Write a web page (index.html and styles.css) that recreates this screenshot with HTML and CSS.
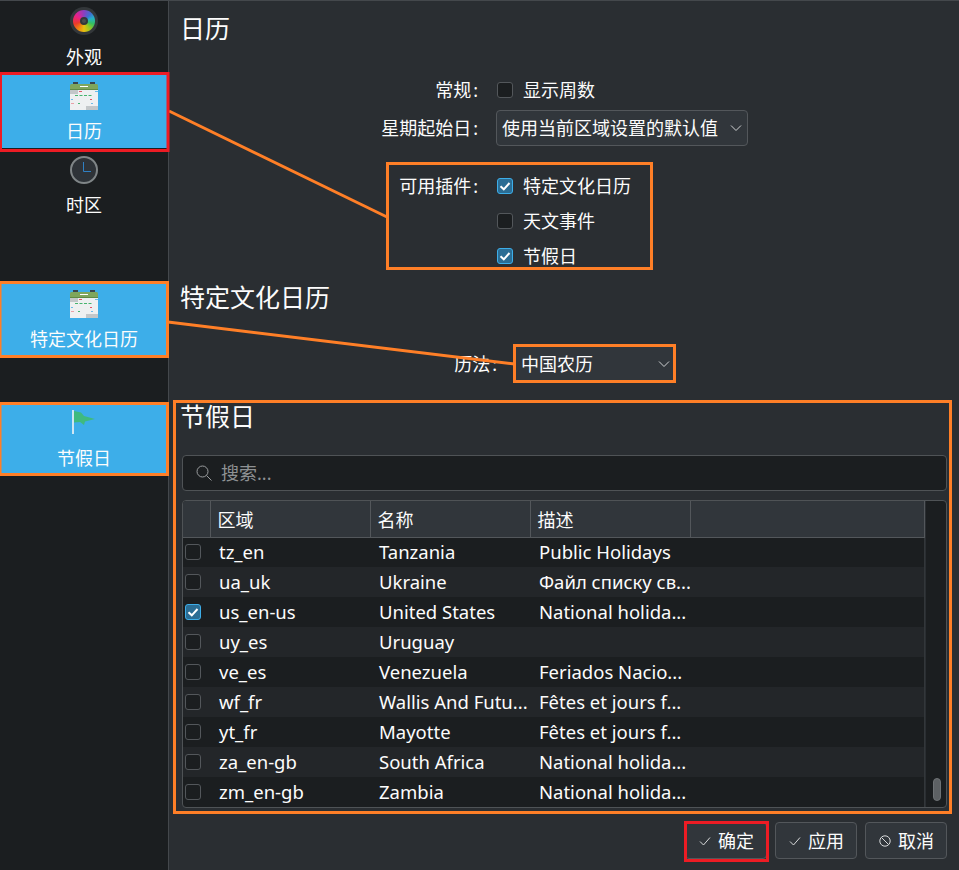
FILE: index.html
```html
<!DOCTYPE html>
<html lang="zh">
<head>
<meta charset="utf-8">
<title>日历</title>
<link rel="stylesheet" href="styles.css">
</head>
<body>
<svg class="defs" width="0" height="0" aria-hidden="true">
  <symbol id="cal" viewBox="0 0 28 28">
    <rect x="3" y="0" width="5" height="4" fill="#3a4650"/>
    <rect x="20" y="0" width="5" height="4" fill="#3a4650"/>
    <path d="M0 8V3.500Q0 2 1.500 2H26.500Q28 2 28 3.500V8Z" fill="#7fa65c"/>
    <rect x="0" y="7" width="28" height="1" fill="#5f8a45"/>
    <rect x="0" y="8" width="28" height="20" fill="#eef0f1"/>
    <rect x="0" y="8" width="8" height="4" fill="#c3c7c9"/>
    <rect x="16" y="24" width="12" height="4" fill="#c3c7c9"/>
    <rect x="10" y="4" width="8" height="1" fill="#fff"/>
    <rect x="9" y="9" width="3" height="1" fill="#e0566a"/>
    <rect x="25" y="9" width="3" height="1" fill="#6cbbe8"/>
    <path d="M5 13.500H22" stroke="#46b46e" stroke-width="1" stroke-dasharray="3 1.500"/>
    <rect x="1" y="17" width="2" height="1" fill="#6cbbe8"/>
    <rect x="20" y="17" width="2" height="1" fill="#e0566a"/>
    <rect x="1" y="21" width="3" height="1" fill="#e8a0a8"/>
    <rect x="8" y="21" width="2" height="1" fill="#46b46e"/>
    <rect x="21" y="21" width="2" height="1" fill="#6cbbe8"/>
  </symbol>
  <symbol id="chk" viewBox="0 0 16 16">
    <path d="M3.500 8.200 6.800 11.300 12.500 5" fill="none" stroke="#fff" stroke-width="2"/>
  </symbol>
  <symbol id="chev" viewBox="0 0 12 8">
    <path d="M1 1.500 6 6.500 11 1.500" fill="none" stroke="#d0d2d3" stroke-width="1"/>
  </symbol>
  <symbol id="tick" viewBox="0 0 12 12">
    <path d="M1 6.500 4.500 10 11 2.500" fill="none" stroke="#d8dadb" stroke-width="1"/>
  </symbol>
</svg>

<div class="app">
  <nav class="sidebar">
    <div class="nav-item first">
      <span class="wheel"><span class="wheel-hole"></span></span>
      <span class="nav-label">外观</span>
    </div>
    <div class="nav-item active main-active">
      <svg class="nav-icon"><use href="#cal"/></svg>
      <span class="nav-label">日历</span>
    </div>
    <div class="nav-item clock-item">
      <svg class="nav-icon" viewBox="0 0 28 28">
        <circle cx="14" cy="14" r="13" fill="#2e3338" stroke="#7f8587" stroke-width="2"/>
        <path d="M13.500 6V15.500H21" fill="none" stroke="#2f80c4" stroke-width="1"/>
      </svg>
      <span class="nav-label">时区</span>
    </div>
    <div class="nav-item active culture">
      <svg class="nav-icon"><use href="#cal"/></svg>
      <span class="nav-label">特定文化日历</span>
    </div>
    <div class="nav-item active holiday">
      <svg class="nav-icon" viewBox="0 0 28 28">
        <rect x="2" y="0" width="2" height="24" fill="#cfe6f4"/>
        <path d="M4 1 11 2.500 14 6 25 9 15 11.500 14 15 10 12 4 12.500Z" fill="#3fba7f"/>
      </svg>
      <span class="nav-label">节假日</span>
    </div>
  </nav>

  <main class="content">
    <h2 class="title title-top">日历</h2>

    <div class="form form-general">
      <div class="row">
        <span class="label">常规<span class="colon">:</span></span>
        <span class="check"><span class="box"></span>显示周数</span>
      </div>
      <div class="row row-combo">
        <span class="label">星期起始日<span class="colon">:</span></span>
        <span class="combo combo-wide">使用当前区域设置的默认值<svg class="chev"><use href="#chev"/></svg></span>
      </div>
      <div class="row row-plugin">
        <span class="label">可用插件<span class="colon">:</span></span>
        <span class="check"><span class="box on"><svg class="box-tick"><use href="#chk"/></svg></span>特定文化日历</span>
      </div>
      <div class="row row-tight">
        <span class="label"></span>
        <span class="check"><span class="box"></span>天文事件</span>
      </div>
      <div class="row row-tight">
        <span class="label"></span>
        <span class="check"><span class="box on"><svg class="box-tick"><use href="#chk"/></svg></span>节假日</span>
      </div>
    </div>

    <h2 class="title title-culture">特定文化日历</h2>
    <div class="form form-culture">
      <div class="row">
        <span class="label label-culture">历法<span class="colon">:</span></span>
        <span class="combo combo-cal">中国农历<svg class="chev"><use href="#chev"/></svg></span>
      </div>
    </div>

    <h2 class="title title-holiday">节假日</h2>
    <div class="search">
      <svg class="search-icon" viewBox="0 0 16 16"><circle cx="6.500" cy="6.500" r="5.500" fill="none" stroke="#9a9d9f" stroke-width="1"/><path d="M10.500 10.500 15.500 15.500" stroke="#9a9d9f" stroke-width="1"/></svg>
      <span>搜索...</span>
    </div>

    <div class="list">
      <table class="grid">
        <colgroup><col class="c0"><col class="c1"><col class="c1"><col class="c1"><col></colgroup>
        <thead><tr><th></th><th>区域</th><th>名称</th><th>描述</th><th></th></tr></thead>
        <tbody>
          <tr><td><span class="box"></span></td><td>tz_en</td><td>Tanzania</td><td>Public Holidays</td><td></td></tr>
          <tr><td><span class="box"></span></td><td>ua_uk</td><td>Ukraine</td><td>Файл списку св...</td><td></td></tr>
          <tr><td><span class="box on"><svg class="box-tick"><use href="#chk"/></svg></span></td><td>us_en-us</td><td>United States</td><td>National holida...</td><td></td></tr>
          <tr><td><span class="box"></span></td><td>uy_es</td><td>Uruguay</td><td></td><td></td></tr>
          <tr><td><span class="box"></span></td><td>ve_es</td><td>Venezuela</td><td>Feriados Nacio...</td><td></td></tr>
          <tr><td><span class="box"></span></td><td>wf_fr</td><td>Wallis And Futu...</td><td>Fêtes et jours f...</td><td></td></tr>
          <tr><td><span class="box"></span></td><td>yt_fr</td><td>Mayotte</td><td>Fêtes et jours f...</td><td></td></tr>
          <tr><td><span class="box"></span></td><td>za_en-gb</td><td>South Africa</td><td>National holida...</td><td></td></tr>
          <tr><td><span class="box"></span></td><td>zm_en-gb</td><td>Zambia</td><td>National holida...</td><td></td></tr>
        </tbody>
      </table>
      <div class="scrollbar"><span class="thumb"></span></div>
    </div>

    <div class="buttons">
      <button class="btn"><svg class="btn-icon"><use href="#tick"/></svg>确定</button>
      <button class="btn"><svg class="btn-icon"><use href="#tick"/></svg>应用</button>
      <button class="btn"><svg class="btn-icon" viewBox="0 0 12 12"><circle cx="6" cy="6" r="5.200" fill="none" stroke="#d8dadb" stroke-width="1"/><path d="M2.500 2.500 9.500 9.500" stroke="#d8dadb" stroke-width="1"/></svg>取消</button>
    </div>
  </main>
</div>

<svg class="marks" width="959" height="870" viewBox="0 0 959 870" aria-hidden="true">
  <g fill="none" stroke="#ff7f27" stroke-width="3">
    <path d="M169 111 387 217"/>
    <path d="M168 322 515 364"/>
    <rect x="387.500" y="163.500" width="264" height="105"/>
    <rect x="514.500" y="345.500" width="160" height="36"/>
    <rect x="174.500" y="401.500" width="776" height="411"/>
    <rect x="0" y="282.500" width="167.500" height="74"/>
    <rect x="0" y="403.500" width="167.500" height="71"/>
  </g>
  <g fill="none" stroke="#ed1c24" stroke-width="3">
    <rect x="0.500" y="73.500" width="167.500" height="77"/>
    <rect x="685.500" y="822.500" width="82" height="38"/>
  </g>
</svg>
</body>
</html>
```
FILE: styles.css
```css
* { box-sizing: border-box; }
html, body { margin: 0; height: 870px; overflow: hidden; }
body {
  background: #2a2e32;
  color: #fcfcfc;
  font: 18px/24px "Noto Sans", "Noto Sans CJK SC", sans-serif;
  position: relative;
}
.defs { position: absolute; }

.app { display: flex; height: 870px; border-top: 1px solid #44484c; }

.sidebar {
  width: 169px;
  flex: none;
  background: #1b1e20;
  border-right: 1px solid #44484c;
  display: flex;
  flex-direction: column;
}
.nav-item {
  display: flex;
  flex-direction: column;
  align-items: center;
}
.nav-label { line-height: 24px; }
.nav-icon { width: 28px; height: 28px; display: block; }
.active { background: #3daee9; }
.first { height: 73px; padding-top: 6px; }
.wheel {
  width: 28px; height: 28px; border-radius: 50%;
  background: #33373a;
  display: flex; align-items: center; justify-content: center;
  position: relative;
}
.wheel::before {
  content: "";
  width: 22px; height: 22px; border-radius: 50%;
  background: conic-gradient(#8a3fc0, #3d6fd0 12%, #25b0c8 20%, #35c060 30%, #9cc820 40%, #e8c010 50%, #f09010 58%, #ec3a2a 70%, #e8208c 85%, #8a3fc0);
}
.wheel-hole {
  position: absolute; left: 10px; top: 10px;
  width: 8px; height: 8px; border-radius: 50%;
  background: #4a4e50;
  border: 2px solid #33373a;
}
.first .nav-label { margin-top: 10px; }
.main-active { height: 76px; padding-top: 8px; border-bottom: 2px solid #1b1e20; }
.main-active .nav-label { margin-top: 9px; }
.clock-item { height: 76px; padding-top: 6px; }
.clock-item .nav-label { margin-top: 9px; }
.culture { margin-top: 55px; height: 76px; padding-top: 9px; }
.culture .nav-label { margin-top: 9px; }
.holiday { margin-top: 45px; height: 73px; padding-top: 8px; }
.holiday .nav-label { margin-top: 8px; }

.content {
  flex: 1;
  min-width: 0;
  padding: 0 12px 0 13px;
  display: flex;
  flex-direction: column;
}
.title { margin: 0 0 0 -2px; font-size: 25px; line-height: 36px; font-weight: 400; }
.title-top { margin-top: 9px; }
.title-culture { margin-top: 11px; }
.title-holiday { margin-top: 16px; }

.form-general { margin-top: 32px; }
.form-culture { margin-top: 31px; }
.row { display: flex; align-items: center; min-height: 24px; }
.row-combo { margin-top: 8px; }
.row-plugin { margin-top: 28px; }
.row-tight { margin-top: 11px; }
.label { width: 296px; flex: none; text-align: right; margin-right: 18px; white-space: nowrap; }
.label-culture { width: 315px; margin-right: 18px; }
.colon { margin-left: 2px; }

.check { display: inline-flex; align-items: center; margin-left: 1px; }
.box {
  width: 16px; height: 16px;
  display: inline-block;
  border: 1px solid #53575b;
  border-radius: 3px;
  background: #1b1e20;
  position: relative;
  flex: none;
}
.check .box { margin-right: 10px; }
.box.on { background: #2b6d94; border-color: #3daee9; }
.box-tick { position: absolute; left: -1px; top: -1px; width: 16px; height: 16px; }

.combo {
  height: 36px;
  display: flex; align-items: center; justify-content: space-between;
  background: #31363b;
  border: 1px solid #53575b;
  border-radius: 4px;
  padding: 0 5px 0 5px;
  white-space: nowrap;
}
.combo-wide { width: 252px; }
.combo-cal { width: 159px; border-color: #31363b; padding-right: 3px; }
.chev { width: 12px; height: 8px; flex: none; }

.search {
  margin-top: 21px;
  height: 36px;
  background: #1b1e20;
  border: 1px solid #4f5356;
  border-radius: 4px;
  display: flex; align-items: center;
  padding-left: 13px;
  color: #8e9193;
}
.search-icon { width: 16px; height: 16px; margin-right: 9px; flex: none; }

.list {
  margin-top: 9px;
  height: 308px;
  display: flex;
  border: 1px solid #4f5356;
  border-radius: 4px;
  background: #1b1e20;
  overflow: hidden;
}
.grid {
  width: 742px;
  flex: none;
  border-collapse: collapse;
  table-layout: fixed;
  border-right: 1px solid #33373a;
}
.c0 { width: 27px; }
.c1 { width: 160px; }
.grid th {
  height: 36px;
  padding: 2px 0 0 7px;
  background: #31363b;
  border-right: 1px solid #53575b;
  border-bottom: 1px solid #53575b;
  font-weight: 400;
  text-align: left;
}
.grid td {
  height: 30px;
  padding: 0 0 0 9px;
  font-size: 18.5px;
  white-space: nowrap;
  overflow: hidden;
}
.grid td:first-child { padding-left: 2px; }
.grid td .box { display: block; }
.grid tbody tr:nth-child(even) { background: #232629; }

.scrollbar { flex: 1; position: relative; border-left: 1px solid #2a2e32; }
.thumb {
  position: absolute;
  left: 7px; top: 277px;
  width: 8px; height: 23px;
  border-radius: 4px;
  background: #5d6164;
  border: 1px solid #6e7275;
}

.buttons {
  margin-top: 14px;
  display: flex;
  justify-content: flex-end;
  gap: 8px;
}
.btn {
  width: 82px; height: 37px;
  display: flex; align-items: center; justify-content: center;
  background: #31363b;
  color: #fcfcfc;
  border: 1px solid #53575b;
  border-radius: 4px;
  font: inherit;
  padding: 0 0 0 1px;
}
.btn-icon { width: 12px; height: 12px; margin-right: 7px; flex: none; }

.marks { position: absolute; left: 0; top: 0; pointer-events: none; }
```
